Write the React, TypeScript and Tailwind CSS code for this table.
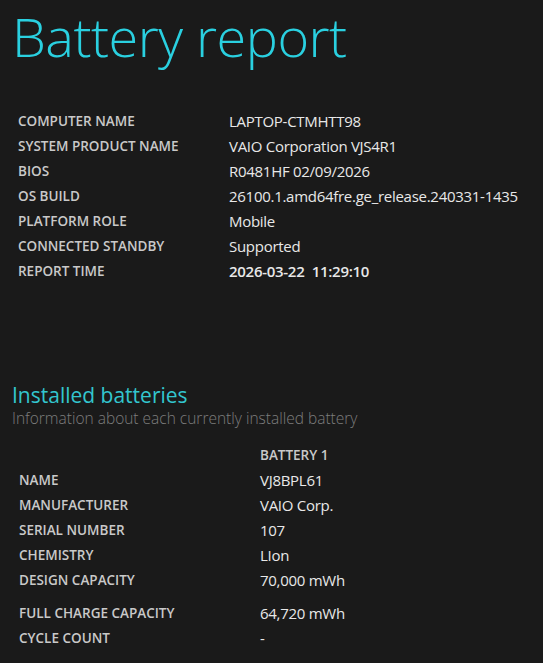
const systemRows: [string, string][] = [
  ['COMPUTER NAME', 'LAPTOP-CTMHTT98'],
  ['SYSTEM PRODUCT NAME', 'VAIO Corporation VJS4R1'],
  ['BIOS', 'R0481HF 02/09/2026'],
  ['OS BUILD', '26100.1.amd64fre.ge_release.240331-1435'],
  ['PLATFORM ROLE', 'Mobile'],
  ['CONNECTED STANDBY', 'Supported'],
]

const batteryRows: [string, string][] = [
  ['NAME', 'VJ8BPL61'],
  ['MANUFACTURER', 'VAIO Corp.'],
  ['SERIAL NUMBER', '107'],
  ['CHEMISTRY', 'LIon'],
  ['DESIGN CAPACITY', '70,000 mWh'],
]

const Label = ({ children }: { children: React.ReactNode }) => (
  <div className="text-[13.5px] font-semibold text-[#c9c9c9]">{children}</div>
)

const Value = ({ children, bold }: { children: React.ReactNode; bold?: boolean }) => (
  <div className={`text-[15px] text-[#e8e8e8] tracking-[-0.28px] ${bold ? 'font-semibold' : 'font-normal'}`}>{children}</div>
)

const App = () => {
  return (
    <div
      className="min-h-screen w-[543px] h-[663px] overflow-hidden bg-[#1a1a1a]"
      style={{ fontFamily: '"Open Sans", "Noto Sans", sans-serif' }}
    >
      <h1 className="pl-[12px] text-[54px] font-light leading-[72px] text-[#2ad0e0] tracking-[-0.5px]">
        Battery report
      </h1>

      <div className="mt-[37px] pl-[18px]">
        {systemRows.map(([k, v]) => (
          <div key={k} className="grid grid-cols-[211px_1fr] h-[25px] items-center">
            <Label>{k}</Label>
            <Value>{v}</Value>
          </div>
        ))}
        <div className="grid grid-cols-[211px_1fr] h-[25px] items-center">
          <Label>REPORT TIME</Label>
          <Value bold>2026-03-22&nbsp;&nbsp;11:29:10</Value>
        </div>
      </div>

      <div className="mt-[98px] pl-[12px]">
        <h2 className="text-[21px] leading-[26px] text-[#33c6cf]">Installed batteries</h2>
        <p className="text-[15.5px] leading-[20px] text-[#7d7d7d] font-light">
          Information about each currently installed battery
        </p>
      </div>

      <div className="mt-[15px] pl-[19px]">
        <div className="grid grid-cols-[241px_1fr] h-[25px] items-center">
          <div />
          <Label>BATTERY 1</Label>
        </div>
        {batteryRows.map(([k, v]) => (
          <div key={k} className="grid grid-cols-[241px_1fr] h-[25px] items-center">
            <Label>{k}</Label>
            <Value>{v}</Value>
          </div>
        ))}
        <div className="grid grid-cols-[241px_1fr] h-[25px] items-center mt-[8px]">
          <Label>FULL CHARGE CAPACITY</Label>
          <Value>64,720 mWh</Value>
        </div>
        <div className="grid grid-cols-[241px_1fr] h-[25px] items-center">
          <Label>CYCLE COUNT</Label>
          <Value>-</Value>
        </div>
      </div>
    </div>
  )
}

export default App
